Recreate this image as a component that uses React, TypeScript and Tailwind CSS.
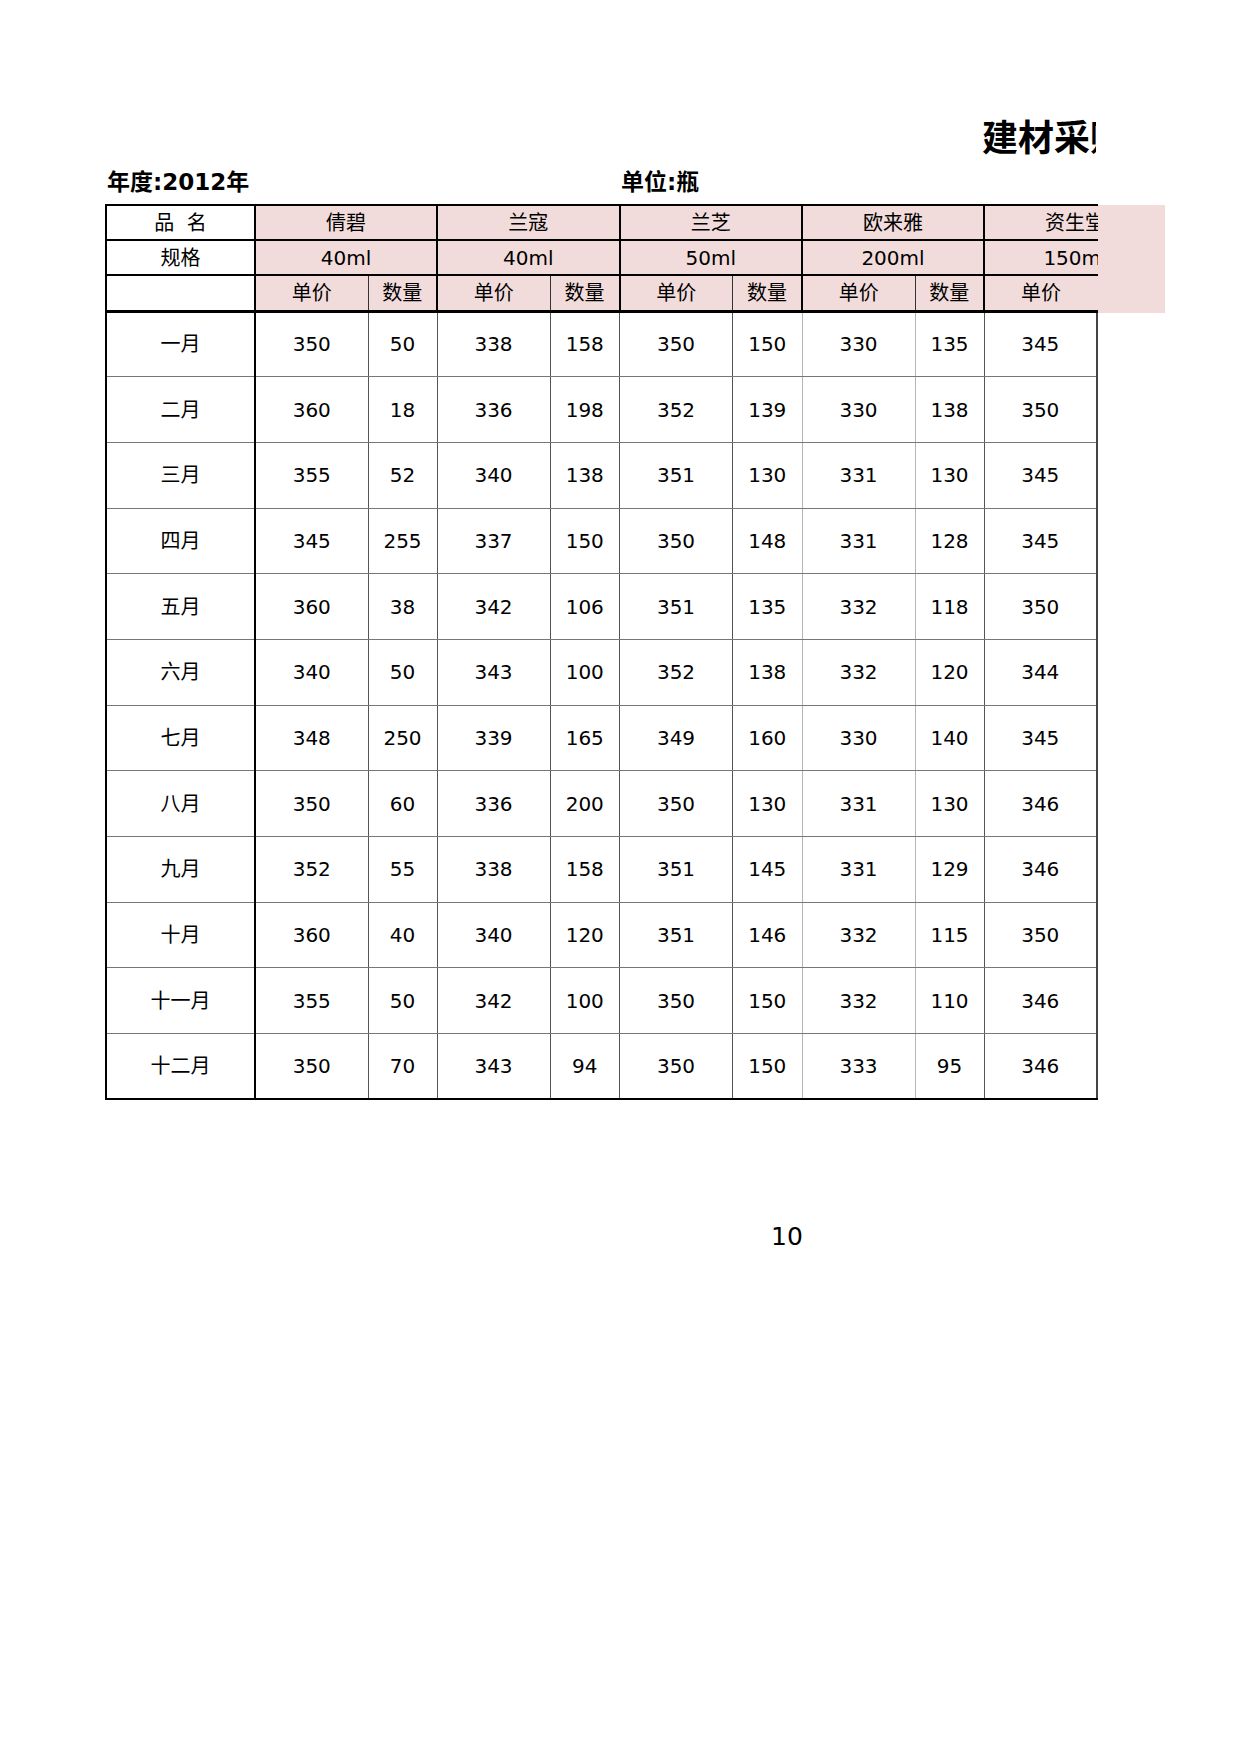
import React from 'react';

const products = [
  { name: '倩碧', spec: '40ml' },
  { name: '兰寇', spec: '40ml' },
  { name: '兰芝', spec: '50ml' },
  { name: '欧来雅', spec: '200ml' },
  { name: '资生堂', spec: '150ml' },
];

// 每行: 月份 + 五个品牌的 单价/数量
const rows: [string, (number | string)[]][] = [
  ['一月', [350, 50, 338, 158, 350, 150, 330, 135, 345, '']],
  ['二月', [360, 18, 336, 198, 352, 139, 330, 138, 350, '']],
  ['三月', [355, 52, 340, 138, 351, 130, 331, 130, 345, '']],
  ['四月', [345, 255, 337, 150, 350, 148, 331, 128, 345, '']],
  ['五月', [360, 38, 342, 106, 351, 135, 332, 118, 350, '']],
  ['六月', [340, 50, 343, 100, 352, 138, 332, 120, 344, '']],
  ['七月', [348, 250, 339, 165, 349, 160, 330, 140, 345, '']],
  ['八月', [350, 60, 336, 200, 350, 130, 331, 130, 346, '']],
  ['九月', [352, 55, 338, 158, 351, 145, 331, 129, 346, '']],
  ['十月', [360, 40, 340, 120, 351, 146, 332, 115, 350, '']],
  ['十一月', [355, 50, 342, 100, 350, 150, 332, 110, 346, '']],
  ['十二月', [350, 70, 343, 94, 350, 150, 333, 95, 346, '']],
];

// right border of each data column (1..10)
const dataCol = [
  'border-r border-r-[#555]',
  'border-r border-r-[#555]',
  'border-r border-r-[#555]',
  'border-r border-r-[#555]',
  'border-r border-r-[#555]',
  'border-r border-r-[#b5b5b5]',
  'border-r border-r-[#b5b5b5]',
  'border-r border-r-[#555]',
  'border-r-2 border-r-[#444]',
  'border-r border-r-[#555]',
];

const App: React.FC = () => {
  return (
    <div className="w-[1240px] min-h-[1754px] bg-white pt-[117px] pl-[105px] text-black font-['DejaVu_Sans','Noto_Sans_CJK_SC',sans-serif]">
      {/* Title (clipped at the print area edge) */}
      <div className="w-[991px] overflow-hidden h-[44px] leading-[44px] whitespace-nowrap pl-[877px] text-[36px] font-bold">
        建材采购统计表
      </div>

      <div className="flex h-[43px] items-center text-[23px] font-bold">
        <span className="w-[516px] pl-[2px]">年度:2012年</span>
        <span>单位:瓶</span>
      </div>

      <div className="flex items-start">
        <div className="w-[993px] overflow-hidden">
          <table className="table-fixed border-collapse w-[1060px] text-[20px] text-center">
            <colgroup>
              <col className="w-[149px]" />
              <col className="w-[113px]" />
              <col className="w-[69px]" />
              <col className="w-[113px]" />
              <col className="w-[69.5px]" />
              <col className="w-[113px]" />
              <col className="w-[69.5px]" />
              <col className="w-[113px]" />
              <col className="w-[69px]" />
              <col className="w-[113px]" />
              <col className="w-[69px]" />
            </colgroup>
            <thead>
              <tr className="h-[35px]">
                <td className="border-2 border-black p-0 whitespace-pre">品  名</td>
                {products.map((p) => (
                  <td key={p.name} colSpan={2} className="border-2 border-black bg-[#f2dcdb] p-0">
                    {p.name}
                  </td>
                ))}
              </tr>
              <tr className="h-[35px]">
                <td className="border-2 border-black p-0">规格</td>
                {products.map((p) => (
                  <td key={p.name} colSpan={2} className="border-2 border-black bg-[#f2dcdb] p-0">
                    {p.spec}
                  </td>
                ))}
              </tr>
              <tr className="h-[36px]">
                <td className="border-2 border-b-[3px] border-black p-0"></td>
                {products.map((p, i) => (
                  <React.Fragment key={p.name}>
                    <td
                      className={`border-t-2 border-b-[3px] border-l-2 border-black bg-[#f2dcdb] p-0 ${
                        i === products.length - 1 ? 'border-r-0' : 'border-r border-r-[#333]'
                      }`}
                    >
                      单价
                    </td>
                    <td className="border-t-2 border-b-[3px] border-r-2 border-black bg-[#f2dcdb] p-0">数量</td>
                  </React.Fragment>
                ))}
              </tr>
            </thead>
            <tbody>
              {rows.map(([month, vals], r) => {
                const last = r === rows.length - 1;
                return (
                  <tr key={month} className="h-[65.7px]">
                    <td
                      className={`p-0 border-l-2 border-r-2 border-l-black border-r-black ${
                        last ? 'border-b-2 border-b-black' : 'border-b border-b-[#777]'
                      }`}
                    >
                      {month}
                    </td>
                    {vals.map((v, i) => (
                      <td
                        key={i}
                        className={`p-0 ${dataCol[i]} ${last ? 'border-b-2 border-b-black' : 'border-b border-b-[#777]'}`}
                      >
                        {v}
                      </td>
                    ))}
                  </tr>
                );
              })}
            </tbody>
          </table>
        </div>
        <div className="w-[67px] h-[108px] mt-[1px] bg-[#f2dcdb]" />
      </div>

      <div className="pl-[666px] mt-[122px] text-[25px] leading-[30px]">10</div>
    </div>
  );
};

export default App;
